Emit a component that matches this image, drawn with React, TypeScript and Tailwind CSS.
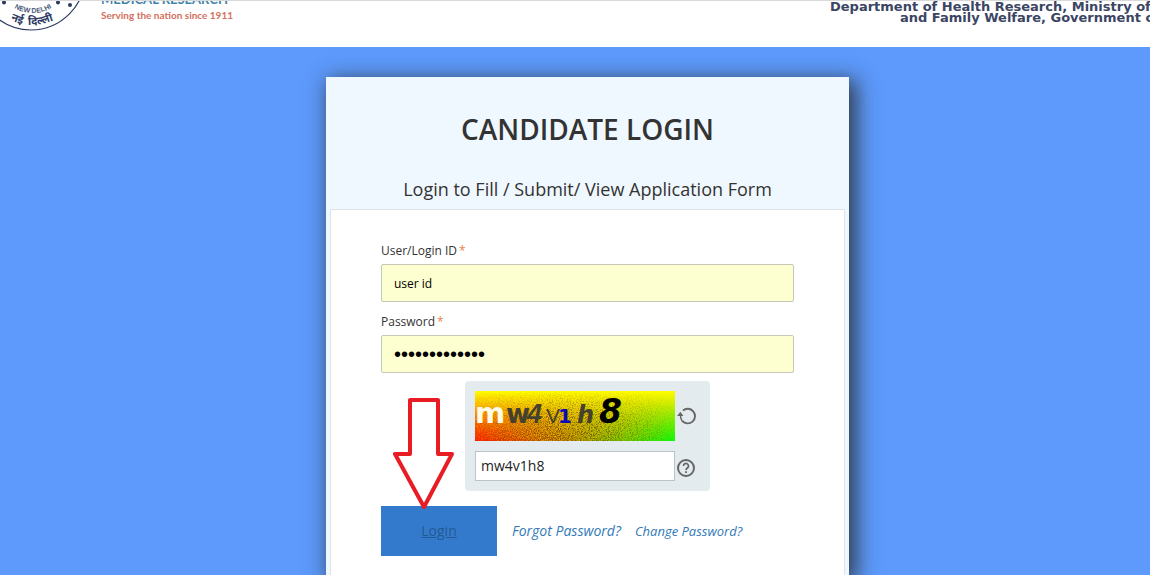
import React, { useState } from 'react';

const captchaChars = [
  { char: 'm', x: 0, y: 32, size: 29, fill: '#fffbe6', weight: 700, style: 'normal', font: 'DejaVu Sans' },
  { char: 'w', x: 31, y: 32, size: 26, fill: '#46412e', weight: 700, style: 'normal', font: 'DejaVu Sans' },
  { char: '4', x: 52, y: 32, size: 27, fill: '#46412e', weight: 700, style: 'italic', font: 'Liberation Sans' },
  { char: 'V', x: 71, y: 32, size: 21, fill: '#46412e', weight: 400, style: 'normal', font: 'Liberation Sans' },
  { char: '1', x: 83, y: 32, size: 20, fill: '#0a0ab4', weight: 700, style: 'normal', font: 'DejaVu Sans' },
  { char: 'h', x: 102, y: 32, size: 24, fill: '#46412e', weight: 700, style: 'italic', font: 'DejaVu Sans' },
  { char: '8', x: 124, y: 32, size: 33, fill: '#000000', weight: 700, style: 'italic', font: 'DejaVu Sans' },
];

const Seal = () => (
  <svg className="w-[90px] h-[46px] shrink-0" viewBox="0 0 90 46" role="img" aria-label="Seal">
    <defs>
      <path id="seal-en" d="M-4 -25 A37 37 0 0 0 70 -25" />
      <path id="seal-hi" d="M-17 -25 A49 49 0 0 0 81 -25" />
    </defs>
    <circle cx="31" cy="-25" r="54" fill="none" stroke="#2b3a63" strokeWidth="1.2" />
    <circle cx="4" cy="1.5" r="2" fill="#2b3a63" />
    <circle cx="58" cy="1.5" r="2" fill="#2b3a63" />
    <circle cx="70" cy="4" r="2" fill="#2b3a63" />
    <text fontFamily="Liberation Sans, sans-serif" fontSize="7" fontWeight="700" fill="#4a5878" textAnchor="middle">
      <textPath href="#seal-en" startOffset="50%">NEW DELHI</textPath>
    </text>
    <text fontFamily="Noto Sans, sans-serif" fontSize="11" fontWeight="700" fill="#2b3a63" textAnchor="middle">
      <textPath href="#seal-hi" startOffset="50%">नई{'\u00a0\u00a0'}दिल्ली</textPath>
    </text>
  </svg>
);

const Header = () => (
  <header className="flex items-start justify-between h-[47px] overflow-hidden bg-white border-t border-[#d9d9d9]">
    <div className="flex">
      <Seal />
      <div className="-mt-2 pl-[11px] font-['Lato',sans-serif] font-bold whitespace-nowrap">
        <p className="text-[13px] leading-3 text-[#4183ac]">MEDICAL RESEARCH</p>
        <p className="pt-1 text-[10px] leading-3 text-[#d4705c]">Serving the nation since 1911</p>
      </div>
    </div>
    <div className="w-[320px] font-['DejaVu_Sans',sans-serif] text-[13px] leading-[11px] font-bold text-[#3b4563] whitespace-nowrap">
      <p>Department of Health Research, Ministry of</p>
      <p className="pl-[70px]">and Family Welfare, Government of</p>
    </div>
  </header>
);

const CaptchaImage = () => (
  <svg className="w-[200px] h-[50px]" viewBox="0 0 200 50" role="img" aria-label="Captcha">
    <defs>
      <linearGradient id="captcha-base" x1="0" x2="1" y1="0" y2="0">
        <stop offset="0" stopColor="#ff1a00" />
        <stop offset="0.45" stopColor="#b07800" />
        <stop offset="0.75" stopColor="#62c400" />
        <stop offset="1" stopColor="#08ff08" />
      </linearGradient>
      <linearGradient id="captcha-top" x1="0" x2="0" y1="0" y2="1">
        <stop offset="0" stopColor="#ffff00" />
        <stop offset="0.2" stopColor="#fff000" stopOpacity="0.85" />
        <stop offset="1" stopColor="#ffd000" stopOpacity="0" />
      </linearGradient>
      <linearGradient id="captcha-fade" x1="0" x2="1" y1="0" y2="0">
        <stop offset="0" stopColor="#fff" stopOpacity="0.3" />
        <stop offset="0.4" stopColor="#fff" />
        <stop offset="0.65" stopColor="#fff" stopOpacity="0.8" />
        <stop offset="1" stopColor="#fff" stopOpacity="0.1" />
      </linearGradient>
      <linearGradient id="captcha-down" x1="0" x2="0" y1="0" y2="1">
        <stop offset="0" stopColor="#000" />
        <stop offset="0.12" stopColor="#000" stopOpacity="0.7" />
        <stop offset="0.6" stopColor="#000" stopOpacity="0" />
      </linearGradient>
      <filter id="captcha-dark" x="0" y="0" width="100%" height="100%" colorInterpolationFilters="sRGB">
        <feTurbulence type="fractalNoise" baseFrequency="0.9" numOctaves="2" seed="4" />
        <feColorMatrix values="0 0 0 0 0.42  0 0 0 0 0.28  0 0 0 0 0  10 0 0 0 -5" />
      </filter>
      <filter id="captcha-light" x="0" y="0" width="100%" height="100%" colorInterpolationFilters="sRGB">
        <feTurbulence type="fractalNoise" baseFrequency="0.9" numOctaves="2" seed="9" />
        <feColorMatrix values="0 0 0 0 1  0 0 0 0 0.85  0 0 0 0 0  0 10 0 0 -5" />
      </filter>
      <mask id="captcha-mask">
        <rect width="200" height="50" fill="url(#captcha-fade)" />
        <rect width="200" height="50" fill="url(#captcha-down)" />
      </mask>
    </defs>
    <rect width="200" height="50" fill="url(#captcha-base)" />
    <rect width="200" height="50" fill="url(#captcha-top)" />
    <g mask="url(#captcha-mask)">
      <rect width="200" height="50" filter="url(#captcha-dark)" opacity="0.7" />
      <rect width="200" height="50" filter="url(#captcha-light)" opacity="0.5" />
    </g>
    {captchaChars.map((item) => (
      <text
        key={item.char}
        x={item.x}
        y={item.y}
        fill={item.fill}
        fontSize={item.size}
        fontWeight={item.weight}
        fontStyle={item.style}
        fontFamily={`${item.font}, sans-serif`}
      >
        {item.char}
      </text>
    ))}
  </svg>
);

const RefreshIcon = () => (
  <svg className="w-5 h-5" viewBox="0 0 20 20" fill="none" aria-hidden="true">
    <path d="M5.9 4.6 A7.3 7.3 0 1 1 5.2 14.9" stroke="#666" strokeWidth="1.9" />
    <path d="M0 10 L3.4 5.8 L6.4 10 Z" fill="#666" />
    <path d="M3.6 9 A7.3 7.3 0 0 0 5.2 14.9" stroke="#666" strokeWidth="1.5" />
  </svg>
);

const HelpIcon = () => (
  <svg className="w-5 h-5" viewBox="0 0 20 20" fill="none" aria-hidden="true">
    <circle cx="9" cy="10" r="8" stroke="#666" strokeWidth="2" />
    <path d="M6.5 8 a2.5 2.5 0 1 1 3.9 2 c-0.9 0.6-1.4 1-1.4 2" stroke="#666" strokeWidth="1.7" />
    <path d="M9 13.2 v1.9" stroke="#666" strokeWidth="1.9" />
  </svg>
);

const Arrow = () => (
  <svg className="absolute left-3 -top-[95px] w-[62px] h-[116px] pointer-events-none" viewBox="0 0 62 116" aria-hidden="true">
    <path
      d="M17 4 H45 V58 H59 L31 111 L2 58 H17 Z"
      fill="#fff"
      stroke="#e81c24"
      strokeWidth="4"
      strokeLinejoin="round"
    />
  </svg>
);

type FieldProps = {
  id: string;
  label: string;
  type: string;
  value: string;
  onChange: (value: string) => void;
};

const Field = ({ id, label, type, value, onChange }: FieldProps) => (
  <div className="mb-2">
    <label htmlFor={id} className="block pt-[1px] pb-[3px] text-[12px] leading-[21px] text-[#333]">
      {label}
      <span className="pl-[2px] text-[#e8834e]">*</span>
    </label>
    <input
      id={id}
      type={type}
      value={value}
      onChange={(e) => onChange(e.target.value)}
      className="block w-full h-[38px] px-3 text-[12px] text-black bg-[#feffd0] border border-[#c5c8b9] rounded-[2px] outline-none [&[type=password]]:font-['Liberation_Sans',sans-serif] [&[type=password]]:text-[20px]"
    />
  </div>
);

const App = () => {
  const [userId, setUserId] = useState('user id');
  const [password, setPassword] = useState('password12345');
  const [captcha, setCaptcha] = useState('mw4v1h8');

  return (
    <div className="flex flex-col min-h-screen overflow-hidden bg-[#5d9afc] font-['Open_Sans',sans-serif]">
      <Header />
      <main className="flex flex-1 justify-center pt-[30px] pl-[25px]">
        <section className="flex flex-col w-full max-w-[523px] px-1 bg-[#f0f8ff] shadow-[5px_5px_20px_2px_rgba(40,40,40,0.85)]">
          <h1 className="pt-8 text-[28px] leading-10 font-semibold text-center text-[#333]">CANDIDATE LOGIN</h1>
          <h2 className="pt-7 pb-2 text-[18px] leading-6 text-center text-[#333]">
            Login to Fill / Submit/ View Application Form
          </h2>
          <form className="flex-1 px-[50px] pt-[29px] bg-white border border-b-0 border-[#dde3e8]" onSubmit={(e) => e.preventDefault()}>
            <Field id="user-id" label="User/Login ID" type="text" value={userId} onChange={setUserId} />
            <Field id="password" label="Password" type="password" value={password} onChange={setPassword} />

            <div className="w-[245px] p-[10px] mx-auto bg-[#e4ebef] rounded-[4px]">
              <div className="flex items-center gap-[2px]">
                <CaptchaImage />
                <button type="button" aria-label="Refresh captcha">
                  <RefreshIcon />
                </button>
              </div>
              <div className="flex items-center gap-[2px] pt-[10px]">
                <input
                  aria-label="Captcha text"
                  value={captcha}
                  onChange={(e) => setCaptcha(e.target.value)}
                  className="w-[200px] h-[30px] px-[5px] pb-[2px] text-[14px] text-[#222] bg-white border border-[#b9c3ca] outline-none"
                />
                <button type="button" aria-label="Captcha help" className="pt-1">
                  <HelpIcon />
                </button>
              </div>
            </div>

            <div className="relative flex items-center pt-[15px]">
              <button type="submit" className="w-[116px] h-[50px] pb-[2px] text-[14px] text-[#235a92] underline bg-[#337acc]">
                Login
              </button>
              <div className="flex items-baseline gap-[14px] pl-[15px] leading-5 italic text-[#337ab7]">
                <a href="#forgot" className="text-[14px]">Forgot Password?</a>
                <a href="#change" className="text-[13px]">Change Password?</a>
              </div>
              <Arrow />
            </div>
          </form>
        </section>
      </main>
    </div>
  );
};

export default App;
